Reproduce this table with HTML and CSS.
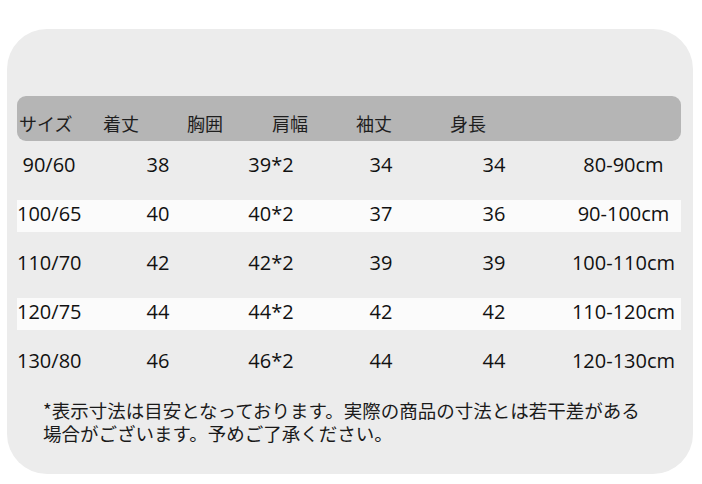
FILE: index.html
```html
<!DOCTYPE html>
<html lang="ja">
<head>
<meta charset="utf-8">
<link rel="stylesheet" href="styles.css">
</head>
<body>
<div class="page">
  <div class="card">
    <div class="head">
      <span class="h h1">サイズ</span>
      <span class="h h2">着丈</span>
      <span class="h h3">胸囲</span>
      <span class="h h4">肩幅</span>
      <span class="h h5">袖丈</span>
      <span class="h h6">身長</span>
    </div>
    <div class="rows">
      <div class="row"><span>90/60</span><span>38</span><span>39*2</span><span>34</span><span>34</span><span class="last">80-90cm</span></div>
      <div class="row stripe"><span>100/65</span><span>40</span><span>40*2</span><span>37</span><span>36</span><span class="last">90-100cm</span></div>
      <div class="row"><span>110/70</span><span>42</span><span>42*2</span><span>39</span><span>39</span><span class="last">100-110cm</span></div>
      <div class="row stripe"><span>120/75</span><span>44</span><span>44*2</span><span>42</span><span>42</span><span class="last">110-120cm</span></div>
      <div class="row"><span>130/80</span><span>46</span><span>46*2</span><span>44</span><span>44</span><span class="last">120-130cm</span></div>
    </div>
    <p class="note">*表示寸法は目安となっております。実際の商品の寸法とは若干差がある<br>場合がございます。予めご了承ください。</p>
  </div>
</div>
</body>
</html>
```

FILE: styles.css
```css
html, body {
  margin: 0;
  padding: 0;
  background: #ffffff;
}

.page {
  padding: 29px 0 0 7px;
}

.card {
  box-sizing: border-box;
  width: 686px;
  height: 445px;
  background: #ececec;
  border-radius: 40px;
  padding: 67px 12px 0 10px;
}

.head {
  box-sizing: border-box;
  height: 45px;
  background: #b5b5b5;
  border-radius: 9px;
  display: flex;
  align-items: flex-end;
  padding: 0 0 7px 2px;
  font-family: "Noto Sans CJK JP", sans-serif;
  font-size: 18px;
  line-height: 22px;
  color: #1e1e1e;
}

.h { display: block; }
.h1 { width: 84px; }
.h2 { width: 84px; }
.h3 { width: 85px; }
.h4 { width: 84px; }
.h5 { width: 94px; }

.rows {
  display: flex;
  flex-direction: column;
  gap: 17px;
  padding-top: 10px;
}

.row {
  height: 32px;
  display: grid;
  grid-template-columns: 64px 154px 72px 148px 78px 1fr;
  align-items: center;
  font-family: "Open Sans", sans-serif;
  font-size: 20px;
  line-height: 28px;
  color: #111111;
  text-align: center;
  padding-bottom: 4px;
  box-sizing: border-box;
}

.row span { white-space: nowrap; }

.row .last {
  padding-left: 33px;
}

.stripe {
  background: #fbfbfb;
}

.note {
  margin: 20px 0 0 26px;
  font-family: "Noto Sans CJK JP", sans-serif;
  font-size: 18.5px;
  line-height: 23px;
  color: #1a1a1a;
}
```
